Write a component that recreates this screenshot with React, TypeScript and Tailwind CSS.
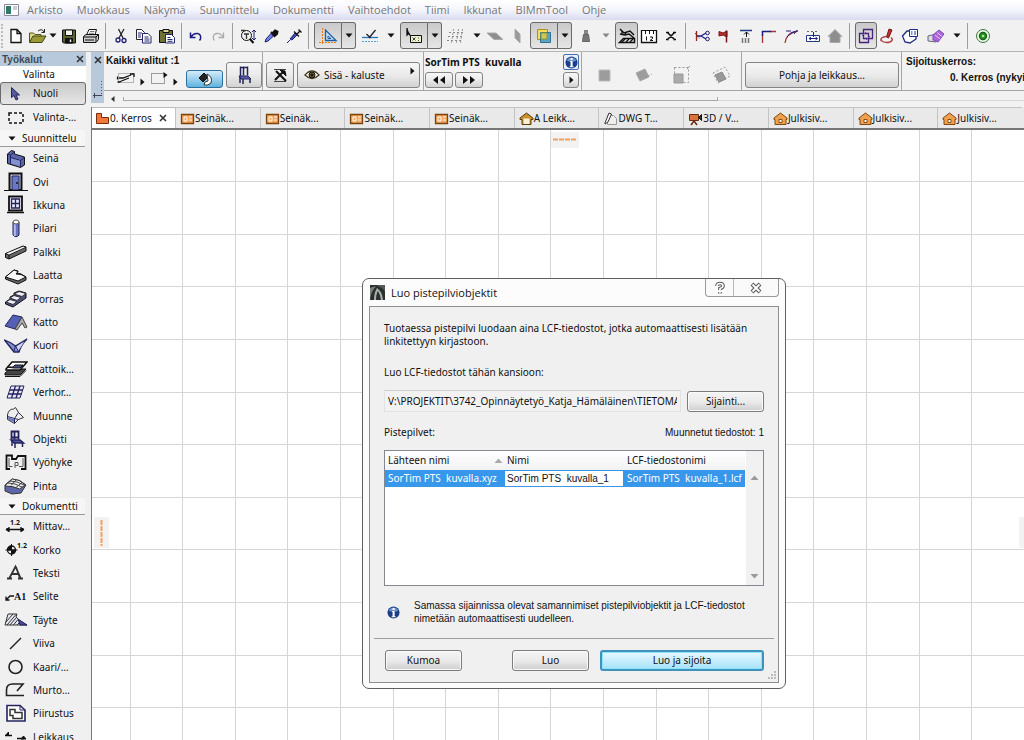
import type { ReactNode } from "react";

const ui = "font-['Noto_Sans','DejaVu_Sans_Condensed',sans-serif]";
const arial = "font-['Liberation_Sans',Arial,sans-serif]";
const segoe = "font-['Open_Sans','Noto_Sans',sans-serif]";

const raised =
  "border border-[#858585] rounded-[3px] bg-linear-to-b from-[#f6f6f6] via-[#ebebeb] to-[#d2d2d2] flex items-center justify-center";
const pressed =
  "border border-[#6b6b6b] bg-linear-to-b from-[#c9c9c9] to-[#e6e6e6] flex items-center justify-center";

function Icon({ w = 20, h = 18, children }: { w?: number; h?: number; children: ReactNode }) {
  return (
    <svg width={w} height={h} viewBox={`0 0 ${w} ${h}`} fill="none" stroke="#111" className="shrink-0" aria-hidden="true">
      {children}
    </svg>
  );
}

function Arrow({ color = "#111" }: { color?: string }) {
  return (
    <Icon w={8} h={5}>
      <path d="M0.5 0.5h7L4 4.5z" fill={color} stroke="none" />
    </Icon>
  );
}

function ArrowRight() {
  return (
    <Icon w={5} h={8}>
      <path d="M0.5 0.5v7L4.5 4z" fill="#111" stroke="none" />
    </Icon>
  );
}

function Close({ color = "#333" }: { color?: string }) {
  return (
    <Icon w={8} h={8}>
      <path d="M1 1l6 6M7 1l-6 6" stroke={color} strokeWidth="1.6" />
    </Icon>
  );
}

function Info({ size = 13 }: { size?: number }) {
  return (
    <svg width={size} height={size} viewBox="0 0 14 14" aria-hidden="true" className="shrink-0">
      <circle cx="7" cy="7" r="6.5" fill="#1b3f86" />
      <path d="M2 5a5.4 5.4 0 0 1 10 0q-5 2.5-10 0z" fill="#6f93cc" />
      <path d="M6 2.2h2.2v2H6zM5.500 5.500h2.700v5.500h1v1H5v-1h1V6.500h-.5z" fill="#fff" />
    </svg>
  );
}

/* ---------- standard toolbar ---------- */

const bar = {
  new: <path d="M5 2.500h6l4 4v9H5zM11 2.500v4h4" fill="#fff" strokeWidth="1.300" />,
  open: (
    <>
      <path d="M1.500 15V6h4l1.500 1.500h6V9" fill="#d8d890" stroke="#55551a" />
      <path d="M1.500 15.500L5 9h13l-4 6.500z" fill="#9a9a38" stroke="#44440f" />
      <path d="M10 4q4-3 6 1M16.500 2v3.500h-3" stroke="#222" />
    </>
  ),
  save: (
    <>
      <path d="M3.500 3h13v13h-12l-1-1z" fill="#5b6230" />
      <path d="M6.500 3h7v5.500h-7z" fill="#f4f4ee" />
      <path d="M6.500 11.500h7V16h-7z" fill="#111" />
      <path d="M11.500 12.500v2.500" stroke="#fff" strokeWidth="1.500" />
    </>
  ),
  print: (
    <>
      <path d="M5.500 8l2.500-5.500h7.500L14 8" fill="#fff" />
      <path d="M2.500 9.500L5 7.500h12.500v5L15 15.500H2.500z" fill="#ccc" />
      <path d="M2.500 10h12.500l2.500-2.500M15 10v5M4 13h9" />
      <path d="M9 4.500h4.500M8 6.300h5" stroke="#777" />
    </>
  ),
  cut: (
    <>
      <path d="M7.500 2l4.500 9M13 2L8 11" stroke="#222" strokeWidth="1.300" />
      <circle cx="7" cy="13" r="2" stroke="#20207a" strokeWidth="1.300" />
      <circle cx="13" cy="13.500" r="2" stroke="#20207a" strokeWidth="1.300" />
    </>
  ),
  copy: (
    <>
      <path d="M2.500 2.500h5l3 3v7h-8z" fill="#fff" stroke="#223" />
      <path d="M8.500 6.500h5.500l3 3v6.500H8.500z" fill="#fff" stroke="#1f2468" />
      <path d="M4 6h4M4 8h3M4 10h3M10.500 10h4M10.500 12h5M10.500 14h5" stroke="#1f2468" />
    </>
  ),
  paste: (
    <>
      <path d="M2.500 3.500h13v12h-13z" fill="#6f7038" />
      <path d="M6 2.500h6v3H6z" fill="#ddd890" />
      <path d="M8.500 7.500h6l3 3V16h-9z" fill="#fff" stroke="#1f2468" />
      <path d="M10.500 10.500h3M10.500 12.500h5M10.500 14.300h5" stroke="#1f2468" />
    </>
  ),
  undo: <path d="M4.500 5.500v5h5M5 10q2.500-4 6.500-3.500 4 .8 3 5.500l-1 1.500" stroke="#1d1d80" strokeWidth="1.500" />,
  redo: <path d="M15.500 5.500v5h-5M15 10q-2.500-4-6.500-3.500-4 .8-3 5.500l1 1.500" stroke="#aaa" strokeWidth="1.300" />,
  zoom: (
    <>
      <circle cx="8.500" cy="8.500" r="5" />
      <path d="M12 12l3.500 4" strokeWidth="2" />
      <path d="M6 7h5M8.500 7v5M3 3.500h4" stroke="#333" strokeWidth="1.300" />
      <path d="M16 3v10M14 5l2-2 2 2M14 11l2 2 2-2" stroke="#222266" />
    </>
  ),
  dropper: (
    <>
      <path d="M4 15l1-3 5-5.500 2.500 2.500L7 14z" fill="#6f86e0" stroke="#1d1d80" />
      <path d="M10 5l4.500 4.500M11.500 6.500L14 3.500l2.500 1-.5 2.500-2.500 2z" fill="#111" strokeWidth="2" />
    </>
  ),
  syringe: (
    <>
      <path d="M3 16l3-3" stroke="#1d1d80" />
      <path d="M6 12l5-6 2 2-5 5z" fill="#3c4fae" stroke="#1d1d80" />
      <path d="M10 4.500l5 5M13 7l3-3M14.500 2.500l3 3" strokeWidth="1.300" />
    </>
  ),
  guide: (
    <>
      <path d="M4.500 1v16M1 15.500h18" stroke="#e87b1a" strokeDasharray="2 1" />
      <path d="M7.500 3v10.500H18z" fill="#bfe0f5" stroke="#1d5fa0" strokeWidth="1.300" />
      <path d="M10 9v2.500h3z" fill="#fff" stroke="#1d5fa0" />
    </>
  ),
  snap: (
    <>
      <path d="M2 10.500h16" stroke="#2278b8" strokeWidth="1.300" />
      <path d="M2 14.500h16" stroke="#5aa0cf" strokeDasharray="2 1" />
      <path d="M6.500 7l4 4M15.500 3L9 11" stroke="#223" strokeWidth="1.300" />
    </>
  ),
  cursorBox: (
    <>
      <path d="M3 1v7l1.800-1.500L6.500 9" fill="#111" strokeWidth="1.300" />
      <path d="M6.500 8.500h11v7h-11z" fill="#eef2cf" />
      <path d="M8.500 10.500l3 3M11.500 10.500l-3 3M14.500 10.500v1M14.500 13v1" stroke="#444" />
    </>
  ),
  grid: (
    <>
      <path d="M3 5.500h15M2 9.500h15M1 13.500h15" stroke="#888" strokeDasharray="2 2" />
      <path d="M7.500 2L5.500 16M12.500 2l-2 14M16.500 2l-2 14" stroke="#999" strokeDasharray="2 2" />
    </>
  ),
  plane1: <path d="M2 6h9l7 6.500H9z" fill="#8e8e8e" stroke="#aaa" />,
  plane2: <path d="M7 2l5 5v9L7 11z" fill="#9a9a9a" stroke="#aaa" />,
  layers: (
    <>
      <path d="M3.500 2.500h10v10h-10z" fill="#f5dc62" stroke="#b28d18" />
      <path d="M6.500 5.500h10v10h-10z" fill="#5ba2c2" stroke="#2f7196" />
      <path d="M7 6h6v6H7z" fill="#c9c95a" stroke="#8f9a30" />
    </>
  ),
  weight: (
    <>
      <path d="M8.500 3.500h3v3h-3z" fill="#999" stroke="#777" />
      <path d="M7.500 7.500h5l1 7h-7z" fill="#777" stroke="#666" />
    </>
  ),
  hatch: (
    <>
      <path d="M3 2l4 4 6-2 4 4M3 7l5 1 4-1 5 4M2.500 15.500l4-4h11v4z" strokeWidth="1.500" />
      <path d="M5 4v3M9 5l-1 3M5 15l3-3M9 15l3-3M13 15l3-3" strokeWidth="1.300" />
    </>
  ),
  ruler: (
    <>
      <path d="M2.500 3v12.500h15V3" fill="#fff" strokeWidth="1.300" />
      <path d="M2 3.500h16M6.500 4v3M10.500 4v3M14.500 4v3M7.500 9.500v4M11 10h2.500v1.500L11 13.500h3" />
    </>
  ),
  cross: <path d="M6.500 5.500l7 7M13.500 5.500l-7 7M5 5.500h3M12 5.500h3M5 12.500h3M12 12.500h3" strokeWidth="1.600" />,
  trim: (
    <>
      <path d="M4.500 4v10" stroke="#a02020" strokeWidth="1.300" />
      <path d="M5 9h4M9 9l5-3M9 9l5 3" stroke="#1d1d80" strokeWidth="1.300" />
      <path d="M3 6l5 6" stroke="#222" strokeDasharray="1 1" />
      <circle cx="15.500" cy="6" r="1.800" stroke="#1d1d80" />
      <circle cx="15.500" cy="12" r="1.800" stroke="#1d1d80" />
    </>
  ),
  axe: (
    <>
      <path d="M5 4.500l4 1.500 4-2v6l-4-2-4 1z" fill="#c22a2a" stroke="#7a1515" />
      <path d="M12.500 3.500v12" stroke="#7a1515" strokeWidth="1.500" />
    </>
  ),
  fit: (
    <>
      <path d="M4 3.500h12" stroke="#223a88" strokeWidth="1.500" />
      <path d="M10.500 10V5M8 7.500l2.500-2.500L13 7.500" />
      <path d="M6.500 11v5M9.500 11v5M12.500 11v5" stroke="#777" strokeWidth="1.500" />
    </>
  ),
  corner: (
    <>
      <path d="M4.500 16V8M12 4.500h6" stroke="#a33" strokeWidth="1.300" />
      <path d="M4.500 9V4.500H13" stroke="#1d1d80" strokeWidth="1.500" />
    </>
  ),
  arc: (
    <>
      <path d="M4 16q1-10 13-12" stroke="#a33" strokeWidth="1.300" />
      <path d="M6 10q3-5 8-5.500M5 4h5M13 7l3-4" stroke="#1d1d80" />
    </>
  ),
  stretch: (
    <>
      <path d="M3.500 8.500h13v6h-13z" fill="#fff" stroke="#223a88" />
      <path d="M4 4.500h12" stroke="#667" strokeDasharray="2 2" />
      <path d="M10.500 5v5M6 11.500h8M8 10l-2 1.500L8 13M12.500 10l2 1.500-2 1.500" stroke="#1d1d80" />
    </>
  ),
  house: <path d="M3 9.500l7-7 7 7h-2v6H5v-6z" fill="#8e8e8e" stroke="#aaa" />,
  group: (
    <>
      <path d="M3.500 6.500h9v9h-9zM7.500 2.500h9v9h-9z" stroke="#46237a" strokeWidth="1.300" />
      <path d="M6 9l4-4M10 13l4-4" stroke="#7a4ab0" />
    </>
  ),
  stamp: (
    <>
      <path d="M9.500 10L12 2l3 1-3.500 8z" fill="#c23030" stroke="#7a1515" />
      <path d="M9 9.500q-6 1-5 4 4 3 9 1.500 4-2 1-4.500" stroke="#b04040" strokeWidth="1.500" />
    </>
  ),
  tag: (
    <>
      <path d="M2.500 9L7 4h9v8l-6 4-5-1z" fill="#fff" stroke="#1f2a88" strokeWidth="1.300" />
      <path d="M9.500 2.500h8v7h-8z" fill="#fff" stroke="#1f2a88" />
      <path d="M11 5h1.500M14 5h2M11 7h1.500M14 7h2" stroke="#1f2a88" />
    </>
  ),
  purple: (
    <>
      <path d="M2 9l8-2v8l-8-1z" fill="#ddd" stroke="#667" />
      <path d="M7 8l6-5 5 4-6 8-5-2z" fill="#ae63d8" stroke="#7b4ac0" />
      <path d="M9 8l5 4M11 5.500l5 4" stroke="#e7c8f7" />
    </>
  ),
  target: (
    <>
      <circle cx="10" cy="9" r="6.500" stroke="#3a7a3a" fill="#eaf6e6" />
      <circle cx="10" cy="9" r="3.500" fill="#2c9c2c" stroke="#155a15" strokeWidth="1.300" />
      <circle cx="10" cy="9" r="1" fill="#cfc" stroke="none" />
    </>
  ),
};

type BarKey = keyof typeof bar;

function Tool({ id, label, width = "w-[23px]" }: { id: BarKey; label: string; width?: string }) {
  return (
    <button aria-label={label} className={`${width} h-7 shrink-0 flex items-center justify-center`}>
      <Icon>{bar[id]}</Icon>
    </button>
  );
}

function More({ color }: { color?: string }) {
  return (
    <button aria-label="Lisää" className="w-3.5 h-7 shrink-0 flex items-center justify-center">
      <Arrow color={color} />
    </button>
  );
}

function SplitTool({ id, label }: { id: BarKey; label: string }) {
  return (
    <div className="flex shrink-0 h-[27px]">
      <button aria-label={label} className={`${pressed} w-7 rounded-l-[3px]`}>
        <Icon>{bar[id]}</Icon>
      </button>
      <button aria-label={`${label}: lisää`} className={`${pressed} w-3.5 rounded-r-[3px] border-l-0`}>
        <Arrow />
      </button>
    </div>
  );
}

const Sep = () => <span className="w-px h-[26px] bg-[#9c9c9c] mx-[3px] shrink-0" />;

function Toolbar() {
  return (
    <div className="h-8 shrink-0 flex items-center bg-[#f1f1f1] border-b border-[#b5b5b5] overflow-hidden">
      <span className="w-0 h-6 border-l-2 border-dotted border-[#bbb] mx-px" />
      <Tool id="new" label="Uusi" />
      <Tool id="open" label="Avaa" width="w-[22px]" />
      <button aria-label="Avaa: lisää" className="w-2 h-7 shrink-0 flex items-center">
        <Arrow />
      </button>
      <Tool id="save" label="Tallenna" />
      <Tool id="print" label="Tulosta" width="w-[22px]" />
      <Sep />
      <Tool id="cut" label="Leikkaa" />
      <Tool id="copy" label="Kopioi" />
      <Tool id="paste" label="Liitä" />
      <Sep />
      <Tool id="undo" label="Kumoa toiminto" width="w-[22px]" />
      <Tool id="redo" label="Toista" width="w-[22px]" />
      <Sep />
      <Tool id="zoom" label="Etsi ja valitse" />
      <Tool id="dropper" label="Poimi" />
      <Tool id="syringe" label="Siirrä asetukset" />
      <Sep />
      <div className="flex items-center gap-0.5 ml-0.5">
        <SplitTool id="guide" label="Apuviivat" />
        <Tool id="snap" label="Tartunta" width="w-6" />
        <More />
        <SplitTool id="cursorBox" label="Koordinaatit" />
        <Tool id="grid" label="Verkko" width="w-6" />
        <More />
      </div>
      <Tool id="plane1" label="Taso" width="w-[22px]" />
      <Tool id="plane2" label="Pystytaso" width="w-6" />
      <div className="flex items-center gap-0.5">
        <SplitTool id="layers" label="Tasot" />
        <Tool id="weight" label="Paino" />
        <More color="#888" />
        <button aria-label="Täytteet" className={`${pressed} w-[23px] h-[27px] rounded-[3px]`}>
          <Icon>{bar.hatch}</Icon>
        </button>
      </div>
      <Tool id="ruler" label="Mitta" width="w-[22px]" />
      <Tool id="cross" label="Poista" width="w-[22px]" />
      <Sep />
      <div className="flex items-center ml-0.5">
        <Tool id="trim" label="Katkaise" width="w-[22px]" />
        <Tool id="axe" label="Jaa" width="w-[22px]" />
        <Tool id="fit" label="Sovita" width="w-[22px]" />
        <Tool id="corner" label="Kulma" width="w-[22px]" />
        <Tool id="arc" label="Pyöristys" />
        <Tool id="stretch" label="Venytä" width="w-[22px]" />
        <Tool id="house" label="Talo" width="w-[22px]" />
      </div>
      <Sep />
      <button aria-label="Ryhmittele" className={`${pressed} w-[22px] h-[27px] rounded-[3px] ml-0.5 shrink-0`}>
        <Icon>{bar.group}</Icon>
      </button>
      <Tool id="stamp" label="Leima" width="w-5" />
      <Tool id="tag" label="Tunniste" width="w-[25px]" />
      <Tool id="purple" label="Merkintä" width="w-7" />
      <More />
      <Sep />
      <Tool id="target" label="Kohde" />
    </div>
  );
}

/* ---------- tool palette ---------- */

const navy = "#23235e";

const design: [string, ReactNode][] = [
  ["Seinä", <><path d="M3.500 5l4-3.500 3 1v2.500l10 3v8l-4 2.500-13-4z" fill="#5a66a8" /><path d="M3.500 5l3 1v8.500M6.500 6l4-3M6.500 8.500l10 3V18M16.500 11.500l4-3" stroke={navy} /><path d="M7 9.200l9 2.600v5.400l-9-2.700z" fill="#8590d0" stroke="none" /></>],
  ["Ovi", <><path d="M5.500 1.500h12V18h-12z" fill="#c8ccdc" strokeWidth="2" /><path d="M8 4h7v14H8z" fill="#6b78c4" stroke={navy} /><circle cx="13" cy="11" r="1" fill="#111" stroke="none" /><path d="M0 18.500h24" /></>],
  ["Ikkuna", <><path d="M5 1.500h13v14H5z" fill="#e9ebf7" strokeWidth="1.800" /><path d="M7.500 4h8v9h-8zM11.500 4v9M7.500 8.500h8" stroke={navy} strokeWidth="1.300" /><path d="M3 17.500h17" strokeWidth="1.500" /></>],
  ["Pilari", <><path d="M9 3v13q3 3.500 6 0V3z" fill="#6b74c0" stroke={navy} /><path d="M10.800 5v12" stroke="#b4bbea" strokeWidth="2" /><ellipse cx="12" cy="3" rx="3" ry="2" fill="#fff" stroke="#555" /></>],
  ["Palkki", <><path d="M1.500 11.500L19 4l3 1v4L5 17l-3.500-1.500z" fill="#666" /><path d="M1.500 11.500L5 13l17-8M5 13v4" /><path d="M2.500 11.500L19 4.700l2 .6L5 12.500z" fill="#f5f5f5" stroke="none" /></>],
  ["Laatta", <><path d="M1.500 11L10 4l4 1-1 2 4 1 5 3v3l-8 4-12.500-5z" fill="#666" /><path d="M1.500 11L10 4l4 1.500-2 2.500 5 .5 5 2.500-8 4z" fill="#f8f8f8" /></>],
  ["Porras", <><path d="M1.500 13l4.500-3v-2l4-2V4l5-2 7 2v5L9 18l-7.500-3z" fill="#4a4f7c" /><path d="M2 13l4-2.500 7 2-4 3zM6 9l4-2.500 7 2-4 3zM10 5l5-2.500 7 2-4 3z" fill="#eef" stroke="#333" /></>],
  ["Katto", <><path d="M1 14L9 3l9 2-7 12z" fill="#5560b4" stroke={navy} /><path d="M11 17l7-12 5 10-2 1-3-5-5 7z" fill="#aaa" stroke="#444" /></>],
  ["Kuori", <><path d="M0.500 4q6 2 11 6L23 3q-6 6-8 13h-5z" fill="#7f8dcc" stroke={navy} strokeWidth="1.300" /><path d="M11.500 10L15 16M11.500 10L10 15" stroke={navy} /><path d="M12.500 10.500l8-5-6 9z" fill="#cfd6f6" stroke="none" /></>],
  ["Kattoik…", <><path d="M1 14l5-4h16l-6 6H1z" fill="#444" /><path d="M2 10l6-7h15l-7 8H2z" fill="#fff" strokeWidth="1.500" /><path d="M3 8h6l2-2h8l-3 3h-6z" fill="#4a5080" /><path d="M1 17.500h15l6-6" /></>],
  ["Verhor…", <><path d="M7 3h13l-4 12H3z" fill="#e8eafa" stroke={navy} /><path d="M5.700 7h13M4.400 11h13M11.500 3l-4 12M16 3l-4 12" stroke={navy} strokeWidth="1.300" /></>],
  ["Muunne", <><path d="M3.500 9q1-6 6-6l2-1.500 3 5 5 5-5 2-4 4-7-4z" fill="#eee" stroke="#333" /><path d="M3.500 10.500l7 2v5M10.500 12.500l4-6M10.500 12.500l4 1" stroke={navy} /><path d="M4 11.300l6 1.700v3.500l-6-3z" fill="#6f7ab8" stroke="none" /></>],
  ["Objekti", <><path d="M7.500 1.500v9M10.500 1.500v9M14.500 1.500v9M7 2.500h8M7 8.500h8" stroke={navy} strokeWidth="1.800" /><path d="M7 11h9l3.500 3H10z" fill="#5058a8" stroke={navy} strokeWidth="1.500" /><path d="M8 12v5M11 14v5M18.500 14v4" stroke={navy} strokeWidth="1.500" /></>],
  ["Vyöhyke", <><path d="M6 16H2.500V2.500H8V6h4l2-3h7.500v13H17" strokeWidth="1.800" /><path d="M8.500 13.500H5V5M19 5v8.500h-4" stroke="#555" /><path d="M11 15V9.500h3v3h-3" stroke="#555" /></>],
  ["Pinta", <><path d="M1 9l7-6q8 0 14 6l-5 8-9 1-7-3z" fill="#5d66a8" stroke="#333" /><path d="M1.500 9l7-6q7 0 13 6-5 3-6 4-6-3-14-3z" fill="#eee" stroke="#333" /><path d="M4 7q7 0 14 4M6 5q7 0 14 4M7 9.500L12 4M12 11.500l6-5" stroke="#444" /></>],
];

const documentTools: [string, ReactNode][] = [
  ["Mittav…", <><path d="M2 12.500h18M5 10v5M17 10v5M2 12.500l3-2M2 12.500l3 2M20 12.500l-3-2M20 12.500l-3 2" strokeWidth="1.300" /><text x="6" y="8" fontSize="7" fontWeight="bold" stroke="none" fill="#111">1.2</text></>],
  ["Korko", <><circle cx="7.500" cy="10" r="4" strokeWidth="1.300" /><path d="M7.500 6v4h-4a4 4 0 0 1 4-4zM7.500 14v-4h4a4 4 0 0 1-4 4z" fill="#111" /><path d="M7.500 4v12M1.500 10h12" /><text x="13" y="8" fontSize="7" fontWeight="bold" stroke="none" fill="#111">1.2</text></>],
  ["Teksti", <path d="M5.500 15L11.500 3.500l5 11.500M8 11h6.500M3 15.500h5M14 15.500h5M12 4l4 11" stroke="#333" strokeWidth="1.800" />],
  ["Selite", <><path d="M2 13l4-4h4M2 9.500V13h3.500" strokeWidth="1.300" /><text x="10" y="13" fontSize="10" fontWeight="bold" stroke="none" fill="#111" fontFamily="Liberation Serif">A1</text></>],
  ["Täyte", <><path d="M1 15l3-11h9l-1 3 5 5 6 3z" fill="#e6e6f4" stroke="#333" /><path d="M2 12l7-8M3 15L12 4.500M6 15l6-7M9.500 15l4-5M13 15l3-3M16 15l1.500-1.500" stroke="#333" /><path d="M14 9l9 6h-7z" fill="#4b4b96" stroke={navy} /></>],
  ["Viiva", <path d="M6 15L17 4" stroke="#222" strokeWidth="1.400" />],
  ["Kaari/…", <circle cx="11.500" cy="10" r="6.500" stroke="#222" strokeWidth="1.600" />],
  ["Murto…", <path d="M20 15.500H2.500V10q0-6 6-6H19l-6 7" stroke="#222" strokeWidth="1.600" />],
  ["Piirustus", <><path d="M3 1.500h13l5 4.500v11H3z" fill="#fff" stroke={navy} strokeWidth="1.600" /><path d="M16 1.500V6h5" stroke={navy} /><path d="M6 5.500h5v3h7v6H9v-3H6z" stroke="#333" strokeWidth="1.500" /></>],
  ["Leikkaus", <><path d="M1 8.500h7M13 11.500h7" strokeWidth="1.300" /><path d="M1.500 8.500L4.500 5v3.500zM17 12l2.500-3 2.500 3z" fill="#111" /></>],
];

function ToolRow({ name, icon }: { name: string; icon: ReactNode }) {
  return (
    <button className="flex items-center gap-[7px] pl-1 text-left whitespace-nowrap">
      <span className="w-[22px] shrink-0">
        <Icon w={24} h={20}>{icon}</Icon>
      </span>
      <span>{name}</span>
    </button>
  );
}

function GroupHeader({ name }: { name: string }) {
  return (
    <button className="h-[17px] shrink-0 w-[85px] flex items-center gap-1.5 pl-2 border-b border-[#999] bg-[#f6f6f6]">
      <Arrow />
      {name}
    </button>
  );
}

function Palette() {
  return (
    <aside className={`${ui} w-[86px] shrink-0 flex flex-col bg-[#f0f0f0] text-[10px] text-[#111] overflow-hidden`}>
      <div className={`${arial} h-3.5 shrink-0 flex items-center justify-between pl-0.5 pr-0.5 bg-[#b7c9db] font-bold text-[10px] text-[#3d4a5a]`}>
        Työkalut
        <button aria-label="Sulje työkalut">
          <Close />
        </button>
      </div>
      <div className="h-4 shrink-0 flex items-center justify-center bg-white pr-2">Valinta</div>
      <button className={`${pressed} rounded-[3px] h-[23px] shrink-0 justify-start! pl-2 gap-3`}>
        <Icon w={12} h={16}>
          <path d="M2.500 1.500v10l2.500-2 2 4.500 2-1-2-4h3.500z" fill="#555a9c" stroke={navy} />
        </Icon>
        Nuoli
      </button>
      <button className="h-[25px] shrink-0 flex items-center gap-[9px] pl-2">
        <Icon w={16} h={12}>
          <path d="M1 1h14v10H1z" strokeWidth="1.500" strokeDasharray="3 2" />
        </Icon>
        Valinta-…
      </button>
      <GroupHeader name="Suunnittelu" />
      <div className="grid auto-rows-fr h-[351px] shrink-0">
        {design.map(([name, icon]) => (
          <ToolRow key={name} name={name} icon={icon} />
        ))}
      </div>
      <GroupHeader name="Dokumentti" />
      <div className="grid auto-rows-fr h-[234px] shrink-0">
        {documentTools.map(([name, icon]) => (
          <ToolRow key={name} name={name} icon={icon} />
        ))}
      </div>
    </aside>
  );
}

/* ---------- info box ---------- */

function Chair() {
  return (
    <Icon w={20} h={20}>
      <path d="M6.500 1.500v10M9.500 1.500v9M13.500 1.500v9M6 2.500h8" stroke={navy} strokeWidth="1.500" />
      <path d="M5 11h9l3 3H7z" fill="#5a60b0" stroke={navy} />
      <path d="M6 12v6M9 14v5M16 14v4" stroke={navy} strokeWidth="1.500" />
    </Icon>
  );
}

const cell = "h-[39px] shrink-0 border-b border-r border-[#a5a5a5]";

function InfoBox() {
  return (
    <div className={`${ui} flex shrink-0 h-[55px] bg-[#f2f2f2] text-[10px] overflow-hidden`}>
      <div className="w-[13px] shrink-0 h-[51px] bg-[#b7c9db] flex flex-col items-center justify-between pt-1 pb-1">
        <button aria-label="Sulje tietoikkuna">
          <Close />
        </button>
        <Icon w={10} h={18}>
          <path d="M8.500 0v14" stroke="#556" strokeDasharray="1 2" />
          <path d="M0 14.500h9M1.500 12v5" stroke="#445" />
        </Icon>
      </div>
      <div className="flex-1 min-w-0 flex flex-col overflow-hidden">
        <div className="flex">
          <div className={`${cell} w-[159px] flex pl-0.5`}>
            <div className="w-20 shrink-0 flex flex-col">
              <span className={`${arial} font-bold text-[10px] leading-[18px] whitespace-nowrap`}>Kaikki valitut :1</span>
              <div className="flex items-end gap-1 pl-2.5">
                <Icon w={20} h={16}>
                  <path d="M2.500 3.500h15v9h-15z" stroke="#777" strokeDasharray="1 1" />
                  <path d="M3 8h4l8-3M3 12l10-4M1.500 6.500v3M1.500 12h3M14 4h4v3" strokeWidth="1.300" />
                </Icon>
                <ArrowRight />
                <Icon w={20} h={16}>
                  <path d="M2.500 3.500h13v10h-13z" stroke="#444" strokeDasharray="1 1" />
                  <path d="M14.500 2v6l4-3z" fill="#111" stroke="none" />
                </Icon>
                <ArrowRight />
              </div>
            </div>
            <div className="flex items-end gap-[3px] pb-0.5">
              <button aria-label="Kallistus" className="w-[37px] h-[18px] rounded-[3px] border border-[#2f6f9c] bg-linear-to-b from-[#d3ecf9] to-[#5cb3e0] flex items-center justify-center">
                <Icon w={18} h={16}>
                  <path d="M3 7l5-5 4 4-5 5z" fill="#222" />
                  <path d="M11 3q6 3 4 9-3 3-7 2l1-3 3-1z" fill="#fff" stroke="#333" />
                </Icon>
              </button>
              <button aria-label="Objektin asetukset" className={`${raised} w-9 h-[26px]`}>
                <Chair />
              </button>
            </div>
          </div>
          <div className={`${cell} w-[161px] flex items-end gap-[3px] pb-0.5 pl-[3px]`}>
            <button aria-label="Muokkaa" className={`${raised} w-7 h-[26px]`}>
              <Icon w={18} h={16}>
                <path d="M3 2.500h12M3 14.500h12" stroke="#444" />
                <path d="M4 13l8-8M5 4l10 10" strokeWidth="2" />
                <path d="M9 3l5 1 1 5z" fill="#111" />
              </Icon>
            </button>
            <button className={`${raised} w-[123px] h-[26px] justify-between! pl-1.5 pr-1 gap-1`}>
              <Icon w={16} h={14}>
                <path d="M1 7q7-8 14 0-7 7-14 0z" fill="#fff" stroke="#443a1c" strokeWidth="1.300" />
                <circle cx="8" cy="7" r="3" fill="#6b5a2c" />
                <circle cx="8" cy="7" r="1" fill="#111" />
              </Icon>
              <span className="flex-1 text-left">Sisä - kaluste</span>
              <span className="mb-2">
                <ArrowRight />
              </span>
            </button>
          </div>
          <div className={`${cell} w-[158px] flex justify-between pl-px pr-0.5`}>
            <div>
              <div className="font-bold text-[10px] leading-5 whitespace-pre">SorTim PTS  kuvalla</div>
              <div className="flex gap-0.5">
                <button aria-label="Edellinen" className={`${raised} w-7 h-4`}>
                  <Icon w={16} h={10}>
                    <path d="M7 1v8L2 5zM14 1v8L9 5z" fill="#111" stroke="none" />
                  </Icon>
                </button>
                <button aria-label="Seuraava" className={`${raised} w-7 h-4`}>
                  <Icon w={16} h={10}>
                    <path d="M2 1v8l5-4zM9 1v8l5-4z" fill="#111" stroke="none" />
                  </Icon>
                </button>
              </div>
            </div>
            <div className="flex flex-col gap-0.5 pt-0.5">
              <button aria-label="Tietoja" className="size-4 border border-[#4a6fae] rounded-[2px] bg-[#e8effa] flex items-center justify-center">
                <Info />
              </button>
              <button aria-label="Laajenna" className={`${raised} size-4 rounded-[2px]`}>
                <ArrowRight />
              </button>
            </div>
          </div>
          <div className={`${cell} w-[160px] flex items-center justify-between pl-3 pr-2.5 pt-2`}>
            <Icon w={20} h={20}>
              <path d="M5 5h11v11H5z" fill="#9c9c9c" stroke="#bbb" />
            </Icon>
            <Icon w={20} h={20}>
              <path d="M3 8l9-4 4 8-9 4z" fill="#9c9c9c" stroke="#aaa" />
              <path d="M13 12l6-3" strokeDasharray="1 2" stroke="#888" />
            </Icon>
            <Icon w={20} h={20}>
              <path d="M2.500 2.500h14v15h-14z" stroke="#999" strokeDasharray="2 2" />
              <path d="M2 9h9v9H2z" fill="#aaa" stroke="#999" />
              <path d="M15 4l3-3" stroke="#999" />
            </Icon>
            <Icon w={20} h={20}>
              <path d="M2 8l12-6 5 9-12 7z" stroke="#999" strokeDasharray="2 2" />
              <path d="M4 10l7-3 4 7-7 3z" fill="#999" stroke="#888" />
            </Icon>
          </div>
          <div className={`${cell} w-[160px] flex items-end pb-0.5 pl-[3px] pr-0.5`}>
            <button className={`${raised} w-full h-[26px]`}>Pohja ja leikkaus...</button>
          </div>
          <div className={`${arial} flex-1 min-w-0 h-[39px] border-b border-[#a5a5a5] font-bold text-[10px] leading-4 pt-0.5 pl-1`}>
            <div>Sijoituskerros:</div>
            <div className="pl-11 whitespace-nowrap">0. Kerros (nykyi</div>
          </div>
        </div>
        <div className="flex-1 flex items-center gap-2 pl-1.5">
          <Icon w={5} h={8}>
            <path d="M4.500 1v6L1 4z" fill="#333" stroke="none" />
          </Icon>
          <div className="flex-1 h-1 border-b border-[#d8d8d8]">
            <div className="w-[66%] h-1 border-l border-r border-b border-[#a8a8a8]" />
          </div>
        </div>
      </div>
    </div>
  );
}

/* ---------- view tabs ---------- */

const tabIcons = {
  story: <path d="M1.500 2.500h5v4h7v6h-12z" fill="#f0793a" stroke="#7a2c10" />,
  schedule: (
    <>
      <path d="M1.500 3.500h12v9h-12z" fill="#f3a55a" stroke="#7a4310" strokeWidth="1.300" />
      <path d="M4 6h3v4H4zM9 6h3M9 9h3" stroke="#fff" />
    </>
  ),
  section: (
    <>
      <path d="M1 7l6.500-5L14 7v1.500h-2v5H3v-5H1z" fill="#c9902e" stroke="#5c3c10" />
      <path d="M4.500 7.500h6v5.500h-6z" fill="#fff3d6" stroke="none" />
    </>
  ),
  elevation: (
    <>
      <path d="M1 7l6.500-5L14 7v1.500h-1v5H2v-5H1z" fill="#f0a04c" stroke="#7a4a14" />
      <path d="M6 8.500h3v3H6z" fill="#fff" stroke="#8a5010" />
    </>
  ),
  sheet: (
    <>
      <path d="M4.500 4.500h6l3 3v6h-9z" fill="#eee" stroke="#999" />
      <path d="M2 12L6 2l2.500 1L5 11l-3 2z" fill="#fff" stroke="#333" />
    </>
  ),
  camera: (
    <>
      <path d="M1.500 3.500h9v6h-9z" fill="#d9733a" stroke="#6b2c10" />
      <path d="M10.500 6.500l3-3v6z" fill="#333" />
      <path d="M6 10l-3 4M6 10l3 4" stroke="#6b2c10" strokeWidth="1.500" />
    </>
  ),
};

const tabs: [keyof typeof tabIcons, string][] = [
  ["schedule", "Seinäk..."],
  ["schedule", "Seinäk..."],
  ["schedule", "Seinäk..."],
  ["schedule", "Seinäk..."],
  ["section", "A Leikk..."],
  ["sheet", "DWG T..."],
  ["camera", "3D / V..."],
  ["elevation", "Julkisiv..."],
  ["elevation", "Julkisiv..."],
  ["elevation", "Julkisiv..."],
];

function Tabs() {
  return (
    <nav className={`${ui} h-[23px] shrink-0 flex text-[10px] border-b-2 border-l border-[#777] bg-[#e9e9e9]`}>
      <button className="w-[83px] shrink-0 flex items-center bg-white border-t border-[#bbb] pl-[3px]">
        <Icon w={15} h={15}>{tabIcons.story}</Icon>
        <span className="flex-1 text-left whitespace-nowrap">0. Kerros</span>
        <span className="pr-2">
          <Close />
        </span>
      </button>
      <div className="flex-1 grid grid-cols-10 mr-0.5">
        {tabs.map(([icon, label], i) => (
          <button key={i} className="flex items-center border-t border-l border-[#c4c4c4] pl-1 whitespace-nowrap overflow-hidden">
            <Icon w={15} h={15}>{tabIcons[icon]}</Icon>
            {label}
          </button>
        ))}
      </div>
    </nav>
  );
}

/* ---------- drawing area ---------- */

function Canvas() {
  return (
    <main className="relative flex-1 min-h-0 border-l border-[#777] bg-white overflow-hidden">
      <svg width="100%" height="100%" className="block" aria-hidden="true">
        <defs>
          <pattern id="grid" x="38" y="-1" width="263" height="263" patternUnits="userSpaceOnUse">
            <path
              d="M0.500 0v263M52.500 0v263M105.500 0v263M157.500 0v263M210.500 0v263M0 .5h263M0 52.500h263M0 105.500h263M0 157.500h263M0 210.500h263"
              stroke="#d6d6d6"
            />
          </pattern>
        </defs>
        <rect width="100%" height="100%" fill="url(#grid)" />
        <rect x="459" y="2" width="28" height="16" fill="#f4f2f0" />
        <path d="M461 9.500h24" stroke="#f0a060" strokeWidth="2" strokeDasharray="5 1" />
        <rect x="2" y="387" width="15" height="31" fill="#f4f2f0" />
        <path d="M9.500 390v26" stroke="#f0a060" strokeWidth="2" strokeDasharray="5 1" />
        <rect x="99.5%" y="387" width="15" height="31" fill="#f4f2f0" />
      </svg>
    </main>
  );
}

/* ---------- dialog ---------- */

const dialogButton =
  "h-[21px] border border-[#7c7c7c] rounded-[3px] bg-linear-to-b from-[#f4f4f4] via-[#ebebeb] to-[#cfcfcf] inset-shadow-[0_0_0_1px_#fafafa]";

function Dialog() {
  return (
    <section
      role="dialog"
      aria-labelledby="dialog-title"
      className={`${ui} absolute left-[362px] top-[278px] w-[424px] border border-[#5f5f5f] rounded-[7px] bg-[#fcfcfc] px-1.5 pb-[5px] text-[10px] leading-[13px] text-[#111]`}
    >
      <header className="flex h-[27px] pl-px">
        <div className="flex items-center gap-1.5 flex-1">
          <svg width="15" height="15" viewBox="0 0 15 15" aria-hidden="true">
            <rect width="15" height="15" fill="#2b302d" />
            <path d="M0 15Q1 6 6 1.500 3 1 0 3z" fill="#77807b" />
            <path d="M4 15Q4 8 7 3q5 3 6 12h-2Q10 9 8 6 6 9 6 15z" fill="#a9b0ac" />
            <path d="M7 1q6 1 8 6V0H8z" fill="#555c58" />
          </svg>
          <h1 id="dialog-title" className={`${segoe} text-[11px]`}>Luo pistepilviobjektit</h1>
        </div>
        <div className="flex h-[18px] w-[74px] border border-t-0 border-[#999] rounded-b-[4px] bg-[#fafafa]">
          <button aria-label="Ohje" className="w-7 border-r border-[#bbb] flex items-center justify-center">
            <Icon w={12} h={14}>
              <path d="M3 5Q3 2.500 6 2.500T9 5Q9 6.500 6 7.500V9M6 11v1.500" stroke="#555" strokeWidth="3.600" />
              <path d="M3 5Q3 2.500 6 2.500T9 5Q9 6.500 6 7.500V9M6 11v1.500" stroke="#fff" strokeWidth="1.600" />
            </Icon>
          </button>
          <button aria-label="Sulje" className="flex-1 flex items-center justify-center">
            <Icon w={14} h={12}>
              <path d="M3 2l8 8M11 2l-8 8" stroke="#555" strokeWidth="4" />
              <path d="M3.500 2.500l7 7M10.500 2.500l-7 7" stroke="#fff" strokeWidth="2" />
            </Icon>
          </button>
        </div>
      </header>

      <div className="relative border border-[#8f8f8f] bg-[#f0f0f0] px-3.5 pb-[11px] pt-[15px]">
        <p>
          Tuotaessa pistepilvi luodaan aina LCF-tiedostot, jotka automaattisesti lisätään
          <br />
          linkitettyyn kirjastoon.
        </p>
        <label htmlFor="folder" className="block mt-[18px]">
          Luo LCF-tiedostot tähän kansioon:
        </label>
        <div className="flex gap-1.5 mt-[11px] items-center">
          <input
            id="folder"
            readOnly
            className="flex-1 min-w-0 h-[22px] px-[3px] border border-[#e2e2e2] border-t-[#cfcfcf] bg-[#f2f2f2]"
            defaultValue="V:\PROJEKTIT\3742_Opinnäytetyö_Katja_Hämäläinen\TIETOMALLI"
          />
          <button className={`${dialogButton} w-[77px]`}>Sijainti...</button>
        </div>
        <div className="flex justify-between mt-3.5">
          <span>Pistepilvet:</span>
          <span className={`${arial} text-[10px]`}>Muunnetut tiedostot: 1</span>
        </div>

        <div className="flex h-[136px] mt-[11px] border border-[#828790] bg-white">
          <div className="flex-1">
            <table className="w-full table-fixed border-collapse text-left">
              <thead>
                <tr className="h-[19px] bg-linear-to-b from-white to-[#f2f2f2]">
                  <th className="font-normal pl-[3px] w-[120px]">
                    <span className="flex items-center justify-between pr-0.5">
                      Lähteen nimi
                      <Icon w={9} h={5}>
                        <path d="M0.500 5l4-4.500 4 4.500z" fill="#aaa" stroke="none" />
                      </Icon>
                    </span>
                  </th>
                  <th className="font-normal pl-0.5 w-[118px]">Nimi</th>
                  <th className="font-normal pl-1">LCF-tiedostonimi</th>
                </tr>
              </thead>
              <tbody>
                <tr className="h-[17px] bg-[#3797ea] text-white whitespace-pre">
                  <td className="p-0 pl-[3px]">SorTim PTS  kuvalla.xyz</td>
                  <td className="p-0">
                    <input
                      aria-label="Nimi"
                      className={`${arial} block w-full h-[15px] bg-white text-[#111] text-[10px] px-0.5`}
                      defaultValue="SorTim PTS  kuvalla_1"
                    />
                  </td>
                  <td className="p-0 pl-1">SorTim PTS  kuvalla_1.lcf</td>
                </tr>
              </tbody>
            </table>
          </div>
          <div className="w-[17px] ml-px bg-[#f1f1f1] flex flex-col justify-between items-center pt-6 pb-1.5">
            <Icon w={9} h={5}>
              <path d="M0.500 5l4-4.500 4 4.500z" fill="#999" stroke="none" />
            </Icon>
            <Icon w={9} h={5}>
              <path d="M0.500 0l4 4.500 4-4.500z" fill="#999" stroke="none" />
            </Icon>
          </div>
        </div>

        <div className="flex items-center gap-3.5 mt-[13px] pl-[3px]">
          <Info />
          <p className={`${arial} text-[10px]`}>
            Samassa sijainnissa olevat samannimiset pistepilviobjektit ja LCF-tiedostot
            <br />
            nimetään automaattisesti uudelleen.
          </p>
        </div>

        <hr className="border-[#9c9c9c] mt-[13px] -mx-2.5" />
        <div className="flex mt-[11px] pl-px">
          <button className={`${dialogButton} w-[77px]`}>Kumoa</button>
          <button className={`${dialogButton} w-[77px] ml-auto`}>Luo</button>
          <button className="w-[164px] h-[21px] ml-[11px] border-2 border-[#3f93bb] rounded-[3px] bg-linear-to-b from-[#e8f8fe] to-[#a5e2fb] inset-shadow-[0_0_0_1px_#8ce4fb]">
            Luo ja sijoita
          </button>
        </div>
        <svg className="absolute right-0.5 bottom-0.5" width="9" height="9" viewBox="0 0 9 9" fill="#bbb" aria-hidden="true">
          <path d="M7 0h2v2H7zM7 3h2v2H7zM7 6h2v2H7zM4 3h2v2H4zM4 6h2v2H4zM1 6h2v2H1z" />
        </svg>
      </div>
    </section>
  );
}

const menus = ["Arkisto", "Muokkaus", "Näkymä", "Suunnittelu", "Dokumentti", "Vaihtoehdot", "Tiimi", "Ikkunat", "BIMmTool", "Ohje"];

export default function App() {
  return (
    <div className="relative h-screen flex flex-col overflow-hidden bg-[#f0f0f0] text-[#111]">
      <nav className={`${segoe} h-5 shrink-0 flex items-center gap-3.5 pl-1 bg-linear-to-b from-white via-[#f4f5fc] to-[#d9dcf0] text-[11px] text-[#777]`}>
        <svg width="15" height="12" viewBox="0 0 15 12" className="-mr-1.5 shrink-0" aria-hidden="true">
          <path d="M0.500 0.500h14v11H.5z" fill="#fff" stroke="#889" />
          <path d="M2 2h5v8H2z" fill="#2e7a6a" />
          <path d="M9 3h4M9 5h4" stroke="#99a" />
        </svg>
        {menus.map((m) => (
          <button key={m}>{m}</button>
        ))}
      </nav>
      <Toolbar />
      <div className="flex-1 min-h-0 flex">
        <Palette />
        <div className="flex-1 min-w-0 flex flex-col pl-[5px]">
          <InfoBox />
          <Tabs />
          <Canvas />
        </div>
      </div>
      <Dialog />
    </div>
  );
}
